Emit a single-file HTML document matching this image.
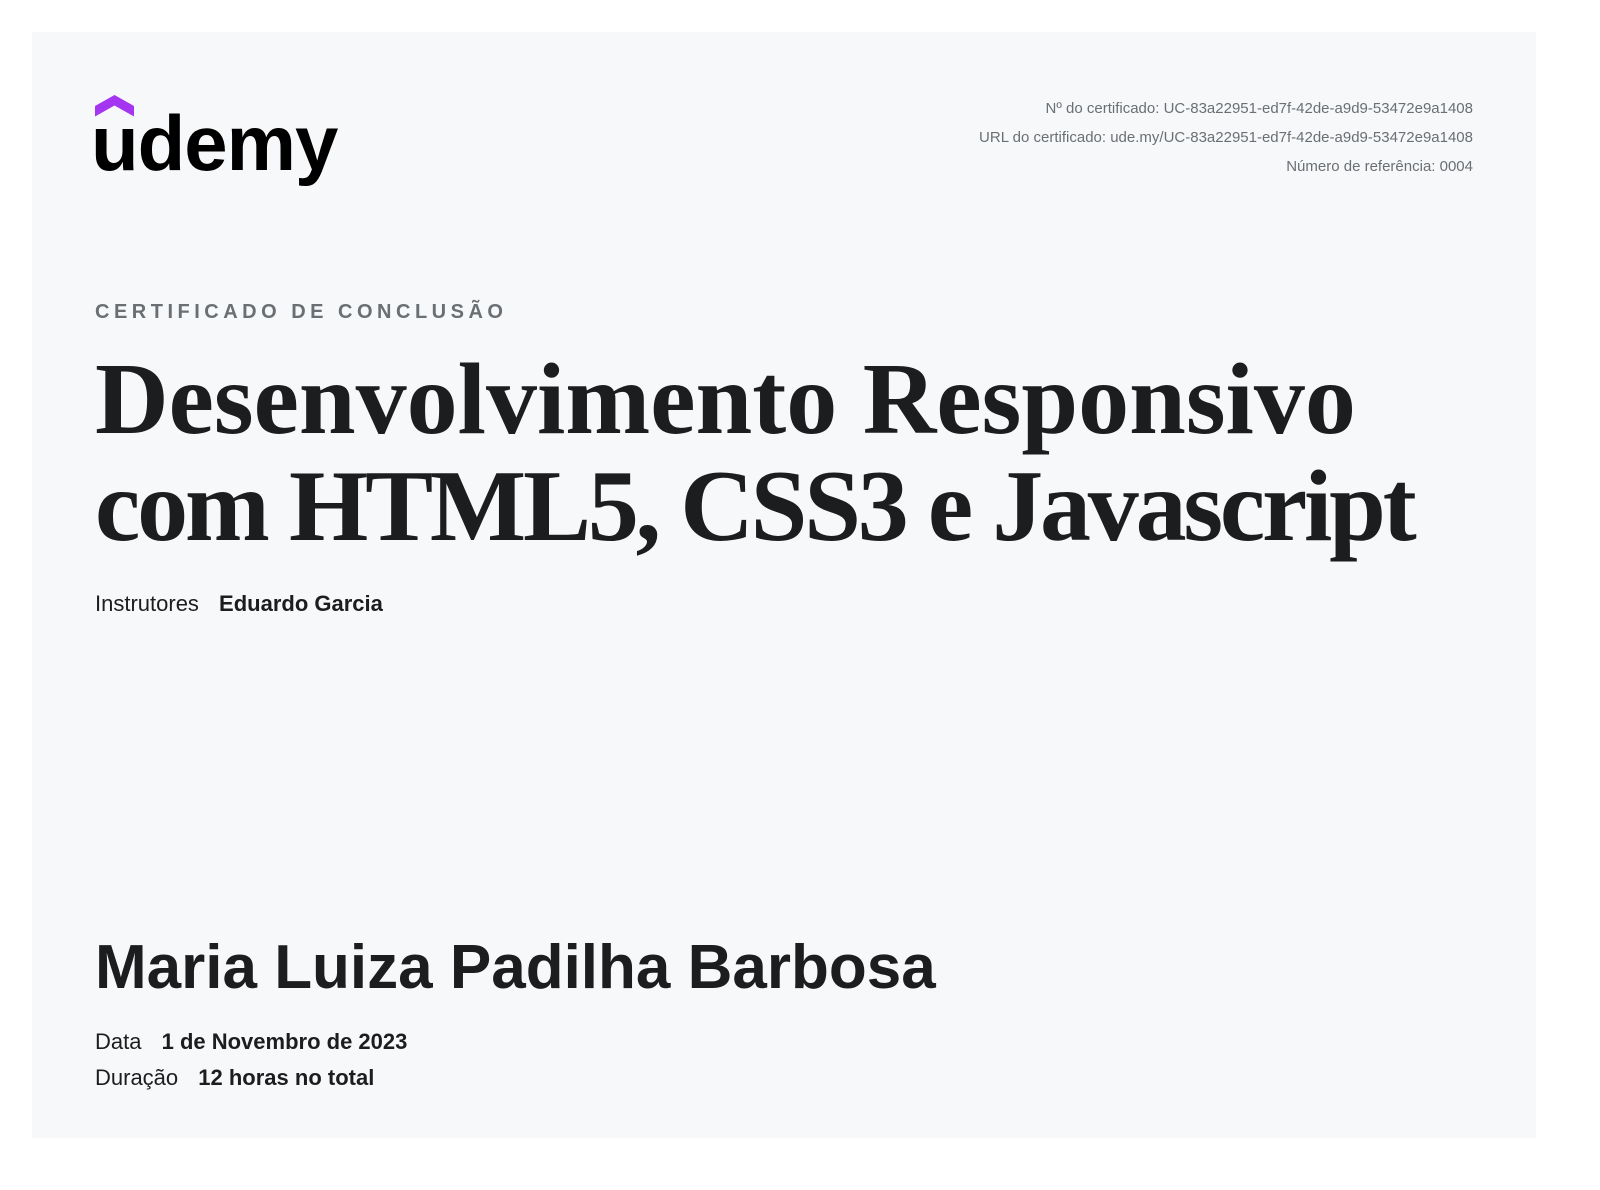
<!DOCTYPE html>
<html><head><meta charset="utf-8"><style>
html,body{margin:0;padding:0;background:#fff;width:1600px;height:1190px;overflow:hidden}
body{position:relative;font-family:"Liberation Sans",sans-serif;color:#1c1d1f}
.card{position:absolute;left:32px;top:32px;width:1504px;height:1106px;background:#f7f8fa}
.a{position:absolute;white-space:nowrap}
.tr{right:127px;font-size:15px;line-height:15px;color:#6a6f73;text-align:right}
.sm{font-size:22px;line-height:22px}
.sm b{margin-left:14px}
</style></head><body>
<div class="card"></div>
<svg class="a" style="left:0;top:0" width="200" height="130"><polygon points="95,106 114.5,95 134,106 134,116.5 114.5,105.5 95,116.5" fill="#a435f0"/></svg>
<div class="a" style="left:91px;top:104px;font-size:78px;line-height:78px;font-weight:bold;letter-spacing:-1px;color:#000">udemy</div>
<div class="a tr" style="top:101px">Nº do certificado: UC-83a22951-ed7f-42de-a9d9-53472e9a1408</div>
<div class="a tr" style="top:130px">URL do certificado: ude.my/UC-83a22951-ed7f-42de-a9d9-53472e9a1408</div>
<div class="a tr" style="top:159px">Número de referência: 0004</div>
<div class="a" style="left:95px;top:302px;font-size:20px;line-height:20px;font-weight:bold;letter-spacing:4.5px;color:#6a6f73">CERTIFICADO DE CONCLUSÃO</div>
<div class="a" style="left:95px;top:346px;font-family:'Liberation Serif',serif;font-weight:bold;font-size:102px;line-height:107px">Desenvolvimento Responsivo<br><span style="letter-spacing:-3.2px">com HTML5, CSS3 e Javascript</span></div>
<div class="a sm" style="left:95px;top:593px">Instrutores <b>Eduardo Garcia</b></div>
<div class="a" style="left:95px;top:937px;font-size:62px;line-height:62px;font-weight:bold">Maria Luiza Padilha Barbosa</div>
<div class="a sm" style="left:95px;top:1031px">Data <b>1 de Novembro de 2023</b></div>
<div class="a sm" style="left:95px;top:1067px">Duração <b>12 horas no total</b></div>
</body></html>
